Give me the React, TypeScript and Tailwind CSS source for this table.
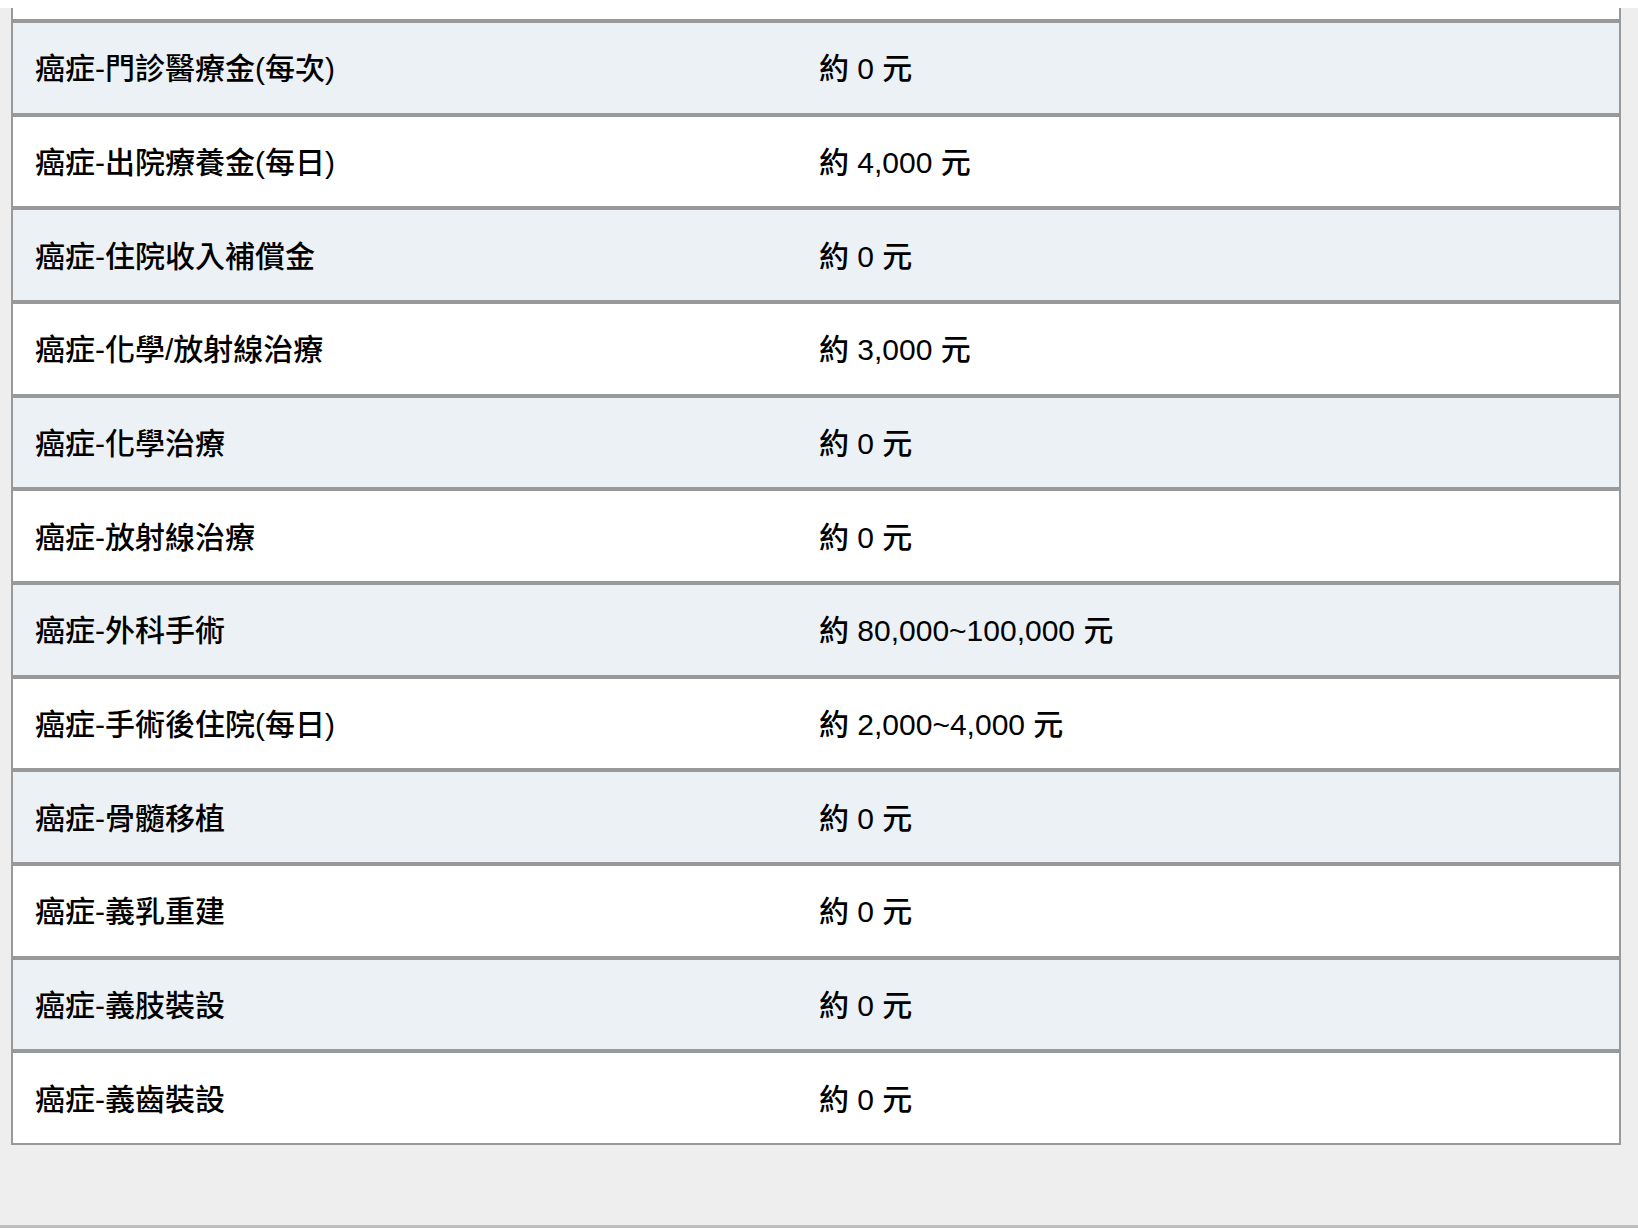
const rows = [
  { name: '癌症-門診醫療金(每次)', amount: '約 0 元' },
  { name: '癌症-出院療養金(每日)', amount: '約 4,000 元' },
  { name: '癌症-住院收入補償金', amount: '約 0 元' },
  { name: '癌症-化學/放射線治療', amount: '約 3,000 元' },
  { name: '癌症-化學治療', amount: '約 0 元' },
  { name: '癌症-放射線治療', amount: '約 0 元' },
  { name: '癌症-外科手術', amount: '約 80,000~100,000 元' },
  { name: '癌症-手術後住院(每日)', amount: '約 2,000~4,000 元' },
  { name: '癌症-骨髓移植', amount: '約 0 元' },
  { name: '癌症-義乳重建', amount: '約 0 元' },
  { name: '癌症-義肢裝設', amount: '約 0 元' },
  { name: '癌症-義齒裝設', amount: '約 0 元' },
];

export default function App() {
  return (
    <div
      className="w-[1638px] h-[1228px] overflow-hidden bg-[#eeeeee] text-black"
      style={{ fontFamily: '"Liberation Sans", "Noto Sans CJK TC", sans-serif' }}
    >
      <div className="h-[8px] bg-white" />
      <div className="pl-[11px] pr-[17px]">
        {/* 保障項目表 */}
        <div className="bg-white border-x-2 border-b-2 border-[#999999]">
          <div className="h-[11px]" />
          {rows.map((row, i) => (
            <div
              key={row.name}
              className={`grid grid-cols-[784px_1fr] items-center h-[93.67px] border-t-4 border-[#999999] pl-[22px] pr-6 pt-[3px] text-[30px] font-medium leading-none ${
                i % 2 === 0 ? 'bg-[#ecf1f6]' : 'bg-white'
              }`}
            >
              <div>{row.name}</div>
              <div>{row.amount}</div>
            </div>
          ))}
        </div>
      </div>
      <div className="h-[80px]" />
      <div className="h-[3px] bg-[#bdbdbd]" />
    </div>
  );
}
